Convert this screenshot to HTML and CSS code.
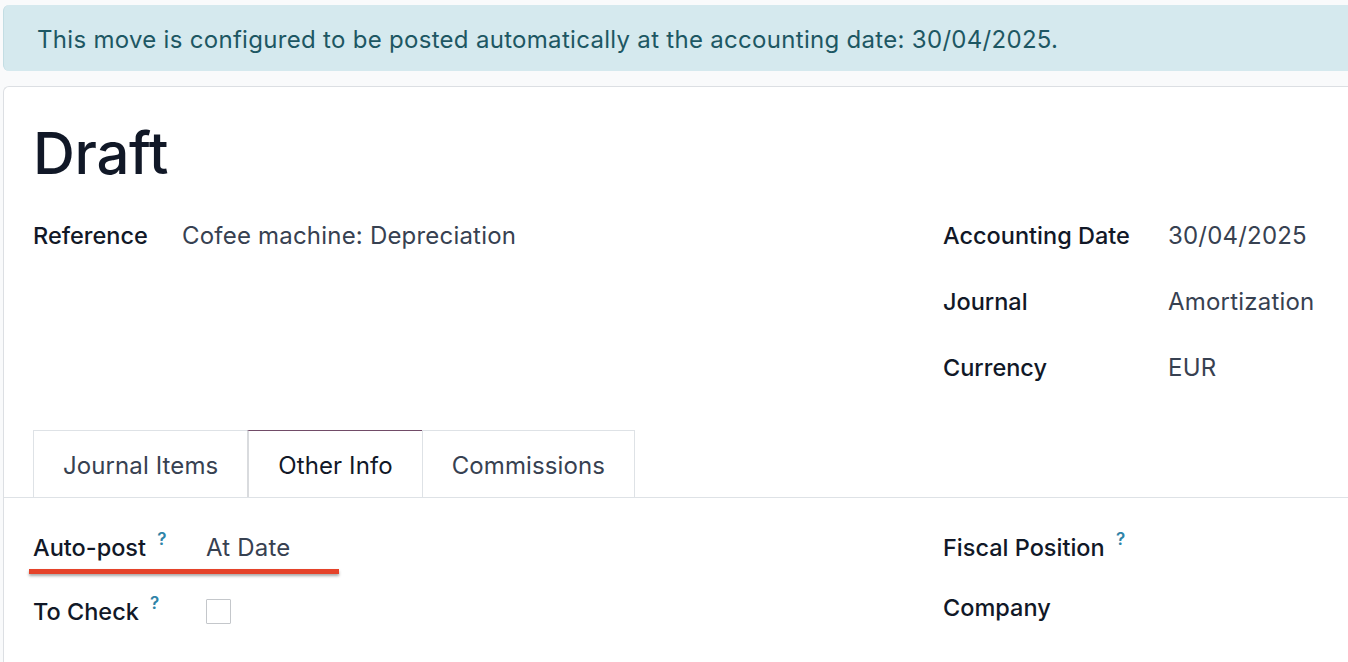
FILE: index.html
```html
<!DOCTYPE html>
<html lang="en">
<head>
  <meta charset="UTF-8" />
  <meta name="viewport" content="width=device-width, initial-scale=1" />
  <title>Draft - Journal Entry</title>
  <link rel="stylesheet" href="styles.css">
</head>
<body>

  <!-- Auto-post notice -->
  <div class="alert">This move is configured to be posted automatically at the accounting date: 30/04/2025.</div>

  <!-- Form sheet -->
  <div class="sheet">
    <h1 class="title">Draft</h1>

    <div class="group header-group">
      <div class="col">
        <div class="field">
          <div class="label">Reference</div>
          <div class="value">Cofee machine: Depreciation</div>
        </div>
      </div>
      <div class="col col-right">
        <div class="field">
          <div class="label">Accounting Date</div>
          <div class="value">30/04/2025</div>
        </div>
        <div class="field">
          <div class="label">Journal</div>
          <div class="value">Amortization</div>
        </div>
        <div class="field">
          <div class="label">Currency</div>
          <div class="value">EUR</div>
        </div>
      </div>
    </div>

    <!-- Notebook tabs -->
    <ul class="tabs">
      <li class="tab">Journal Items</li>
      <li class="tab active">Other Info</li>
      <li class="tab">Commissions</li>
    </ul>

    <div class="group tab-content">
      <div class="col">
        <div class="field highlight">
          <div class="label">Auto-post <sup class="help">?</sup></div>
          <div class="value">At Date</div>
        </div>
        <div class="field">
          <div class="label">To Check <sup class="help">?</sup></div>
          <div class="value"><span class="checkbox"></span></div>
        </div>
      </div>
      <div class="col col-right">
        <div class="field">
          <div class="label">Fiscal Position <sup class="help">?</sup></div>
          <div class="value"></div>
        </div>
        <div class="field">
          <div class="label">Company</div>
          <div class="value"></div>
        </div>
      </div>
    </div>
  </div>

</body>
</html>
```

FILE: styles.css
```css
body {
  font-family: Inter, "Noto Sans", sans-serif;
  background: #f9fafb;
  margin: 0;
  padding: 5px 0 0 3px;
  color: #111827;
  overflow: hidden;
}
/* Info alert */
.alert {
  background: #d5e9ee;
  color: #1d5763;
  font-size: 24px;
  letter-spacing: 0.3px;
  height: 66px;
  line-height: 70px;
  padding-left: 33px;
  border-radius: 6px 0 0 6px;
  border-left: 1px solid #c3dde3;
}
/* Sheet */
.sheet {
  margin-top: 15px;
  background: #fff;
  border: 1px solid #dcdfe3;
  border-right: none;
  border-radius: 6px 0 0 0;
  height: 600px;
}
.title {
  font-size: 58px;
  font-weight: 500;
  margin: 0;
  padding: 30px 0 0 29px;
  line-height: 72px;
  letter-spacing: -0.3px;
}
.group {
  display: flex;
  padding: 0 0 0 29px;
}
.header-group {
  margin-top: 32px;
}
.col {
  width: 910px;
}
.col-right {
  flex: 1;
}
.field {
  display: flex;
  align-items: baseline;
  height: 66px;
}
.tab-content .field {
  height: 64px;
}
.label {
  font-size: 23.5px;
  font-weight: 500;
  color: #111827;
  width: 149px;
  flex: none;
}
.tab-content .col .label {
  width: 173px;
}
.col-right .label,
.tab-content .col-right .label {
  width: 225px;
}
.value {
  font-size: 24px;
  color: #374151;
  letter-spacing: 0.2px;
}
.help {
  color: #2f84a8;
  font-size: 17px;
  font-weight: 600;
  vertical-align: 11px;
  margin-left: 5px;
}
/* Tabs */
.tabs {
  list-style: none;
  margin: 11px 0 0;
  padding: 0 0 0 29px;
  display: flex;
  border-bottom: 1px solid #dee2e6;
}
.tab {
  font-size: 24px;
  letter-spacing: 0.1px;
  color: #374151;
  height: 66px;
  line-height: 70px;
  padding: 0 29px;
  border: 1px solid #dee2e6;
  border-bottom: none;
  margin-right: -1px;
}
.tab.active {
  color: #111827;
  border-top: 1px solid #714b67;
  border-left: 2px solid #d9dbde;
  background: #fff;
}
.tab-content {
  padding-top: 31px;
}
/* Highlighted field (annotation) */
.highlight {
  position: relative;
}
.highlight::after {
  content: "";
  position: absolute;
  left: -4px;
  width: 310px;
  top: 40px;
  height: 5px;
  background: #e5432a;
  box-shadow: 0 2px 3px rgba(0, 0, 0, 0.35);
}
.checkbox {
  display: inline-block;
  width: 23px;
  height: 23px;
  border: 1px solid #c4c7cb;
  border-radius: 1px;
  vertical-align: -4px;
}
```
